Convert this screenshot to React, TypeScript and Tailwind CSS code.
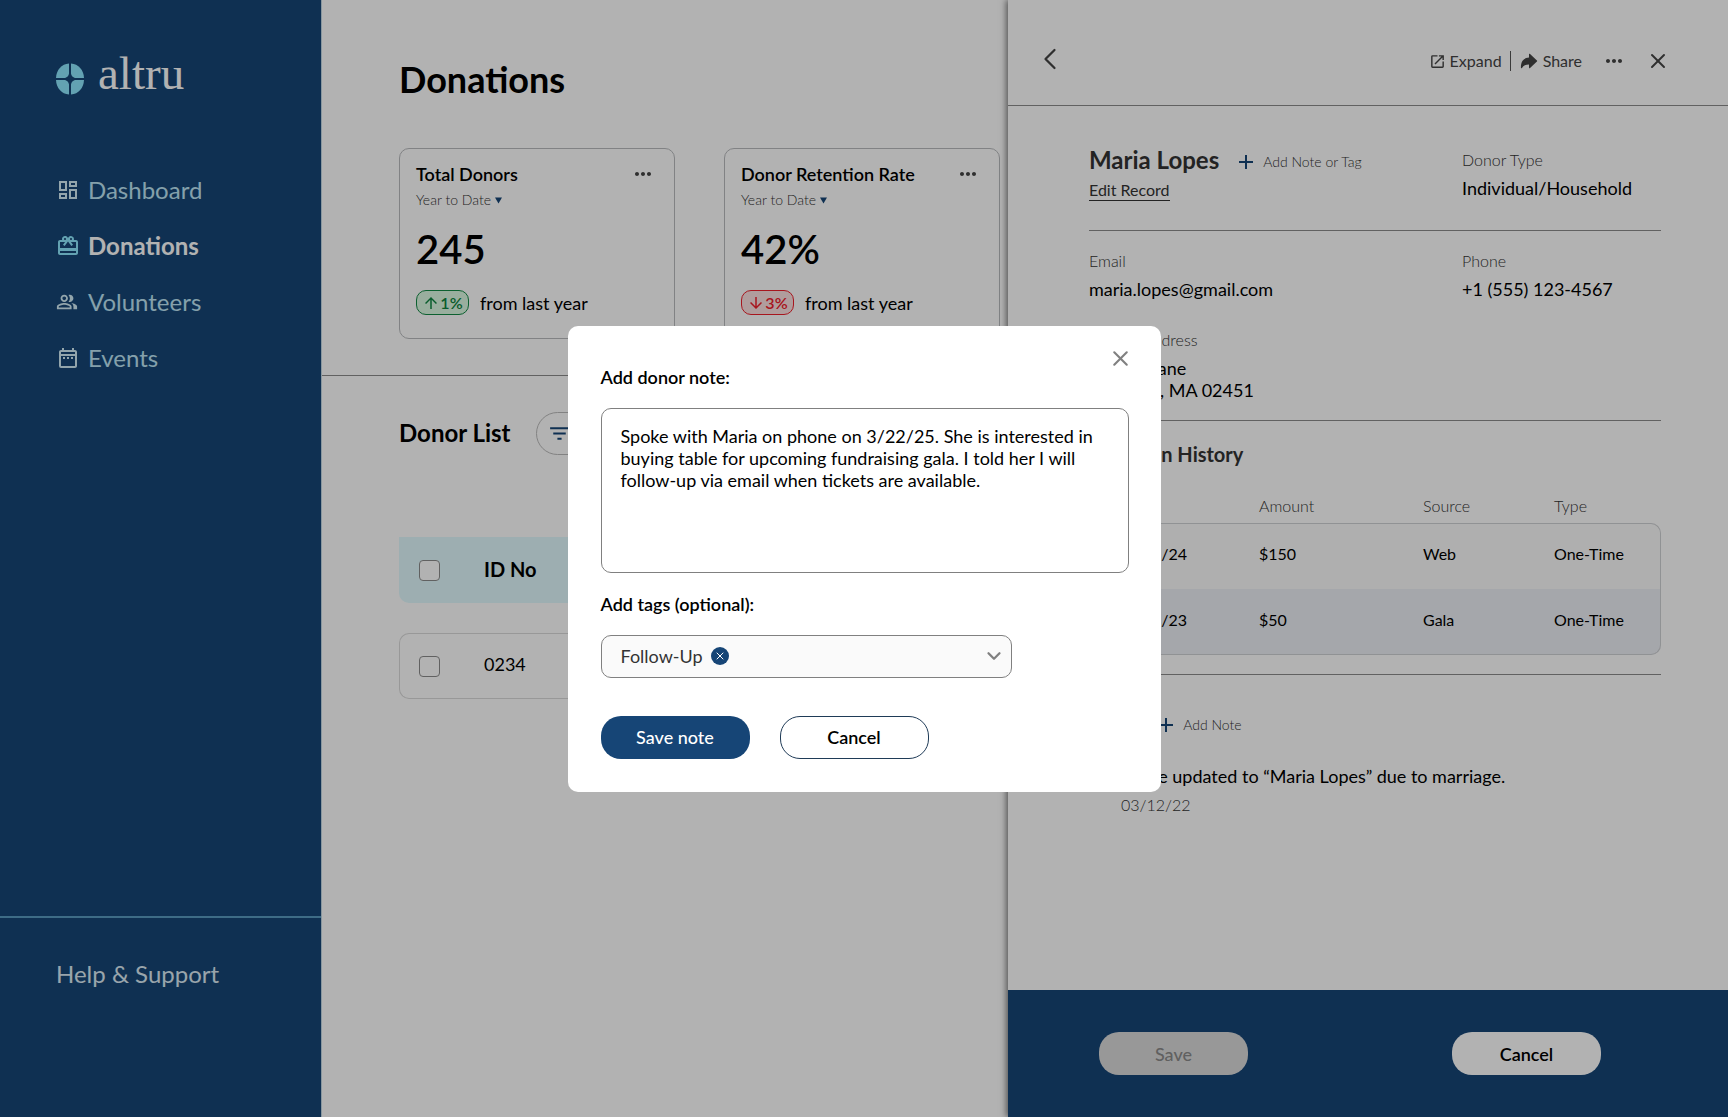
import React, { useState } from 'react';
import { ChevronDown, ChevronLeft, X } from 'lucide-react';
import { IoArrowRedo } from 'react-icons/io5';
import {
  MdArrowDownward,
  MdArrowUpward,
  MdFilterList,
  MdMoreHoriz,
  MdOpenInNew,
  MdOutlineCardGiftcard,
  MdOutlineDashboard,
  MdOutlineDateRange,
  MdOutlinePeopleAlt,
} from 'react-icons/md';

const navItems = [
  { label: 'Dashboard', Icon: MdOutlineDashboard, size: 24 },
  { label: 'Donations', Icon: MdOutlineCardGiftcard, size: 24, active: true },
  { label: 'Volunteers', Icon: MdOutlinePeopleAlt, size: 22 },
  { label: 'Events', Icon: MdOutlineDateRange, size: 24 },
];

const stats = [
  { title: 'Total Donors', value: '245', change: '1%', up: true },
  { title: 'Donor Retention Rate', value: '42%', change: '3%', up: false },
];

const donations = [
  { date: '12/03/24', amount: '$150', source: 'Web', type: 'One-Time' },
  { date: '11/18/23', amount: '$50', source: 'Gala', type: 'One-Time' },
];

function Logo() {
  return (
    <div className="flex items-center gap-3.5 pl-14">
      <svg width="28" height="32" viewBox="0 0 28 32" className="mt-3" fill="#8fe9ff">
        <path d="M13 0.500V10C13 12.500 11 15 8 15H0C0.300 7 5.500 1 13 0.500Z" />
        <path d="M15 0.500V10C15 12.500 17 15 20 15H28C27.700 7 22.500 1 15 0.500Z" />
        <path d="M13 31.500V22C13 19.500 11 17 8 17H0C0.300 25 5.500 31 13 31.500Z" />
        <path d="M15 31.500V22C15 19.500 17 17 20 17H28C27.700 25 22.500 31 15 31.500Z" />
      </svg>
      <span className="font-['Liberation_Serif',serif] text-[47px] leading-12 text-white">altru</span>
    </div>
  );
}

function Sidebar() {
  return (
    <aside className="flex w-[322px] shrink-0 flex-col border-r border-[#c3d9e4] bg-[#164576] pt-[49px]">
      <Logo />
      <nav className="mt-[77px] flex flex-col gap-6 pl-14">
        {navItems.map(({ label, Icon, size, active }) => (
          <a
            key={label}
            href="#"
            className={`flex items-center gap-2 text-2xl leading-8 ${active ? 'font-bold text-white' : 'text-[#bfe6f5]'}`}
          >
            <span className={`w-6 ${active ? 'text-[#8fe9ff]' : 'text-[#d3edf7]'}`}>
              <Icon size={size} />
            </span>
            {label}
          </a>
        ))}
      </nav>
      <div className="mt-auto h-[201px] border-t-2 border-[#5a9bc0] pt-10 pl-14">
        <a href="#" className="text-2xl leading-8 text-[#dcebf5]">Help &amp; Support</a>
      </div>
    </aside>
  );
}

function StatCard({ title, value, change, up }: { title: string; value: string; change: string; up: boolean }) {
  return (
    <section className="w-[276px] shrink-0 rounded-[10px] border border-[#b9bbbe] px-4 pt-[13px] pb-[23px]">
      <div className="flex items-center justify-between">
        <h2 className="text-lg leading-6 font-semibold">{title}</h2>
        <button aria-label={`${title} options`} className="mr-[3px] text-[#444]">
          <MdMoreHoriz size={24} />
        </button>
      </div>
      <button className="mt-1 flex items-center gap-1 text-sm leading-5 font-light text-[#333]">
        Year to Date
        <svg width="7" height="7" viewBox="0 0 7 7" fill="#164576"><path d="M0 0.500H7L3.500 6.500Z" /></svg>
      </button>
      <p className="mt-[15px] text-[40px] leading-12 font-semibold">{value}</p>
      <div className="mt-[17px] flex items-center gap-[11px]">
        <span
          className={`flex h-[25px] w-[53px] items-center justify-center rounded-[10px] border font-semibold ${
            up ? 'border-[#128a45] bg-[#dcf9e3] text-[#0d8540]' : 'border-[#f0202c] bg-[#fde1e1] text-[#f0202c]'
          }`}
        >
          {up ? <MdArrowUpward size={18} /> : <MdArrowDownward size={18} />}
          {change}
        </span>
        <span className="text-lg leading-6">from last year</span>
      </div>
    </section>
  );
}

function DonorList() {
  return (
    <section className="mt-9 border-t border-[#8c8c8c] pt-9 pr-2 pl-[77px]">
      <div className="flex items-center gap-[25px]">
        <h2 className="pb-0.5 text-2xl font-bold">Donor List</h2>
        <button className="flex h-[43px] items-center gap-2 rounded-full border border-[#bbb] px-2.5 text-lg text-[#164576]">
          <MdFilterList size={25} />
          Filter
        </button>
      </div>
      <table className="mt-[52px] w-full border-separate border-spacing-x-0 border-spacing-y-[30px] text-left">
        <thead>
          <tr className="h-[66px] bg-[#e1fafe] text-xl">
            <th className="w-[85px] rounded-bl-[10px] pl-5">
              <input
                type="checkbox"
                aria-label="Select all donors"
                className="block size-[21px] appearance-none rounded border border-[#8c8c8c] bg-white"
              />
            </th>
            <th className="pb-0.5 font-bold">ID No</th>
          </tr>
        </thead>
        <tbody>
          <tr className="h-[66px] text-lg">
            <td className="rounded-l-[10px] border-y border-l border-[#dadada] pl-[19px]">
              <input
                type="checkbox"
                aria-label="Select donor 0234"
                className="block size-[21px] appearance-none rounded border border-[#8c8c8c] bg-white"
              />
            </td>
            <td className="rounded-r-[10px] border-y border-r border-[#dadada] pb-1">0234</td>
          </tr>
        </tbody>
      </table>
    </section>
  );
}

function Field({ label, children }: { label: string; children: React.ReactNode }) {
  return (
    <div className="flex flex-col gap-[7px]">
      <span className="leading-5 font-light text-[#333]">{label}</span>
      <span className="text-lg leading-[22px]">{children}</span>
    </div>
  );
}

function AddButton({ children }: { children: React.ReactNode }) {
  return (
    <button className="flex items-center gap-2.5 pt-1 text-sm leading-5 font-light text-[#333]">
      <svg width="14" height="14" viewBox="0 0 14 14" stroke="#164576" strokeWidth="2"><path d="M7 0V14M0 7H14" /></svg>
      {children}
    </button>
  );
}

function DonationHistory() {
  return (
    <section className="border-b border-[#8c8c8c] pt-[21px] pb-[19px]">
      <h3 className="text-xl leading-6 font-bold text-[#333]">Donation History</h3>
      <table className="mt-[30px] w-full table-fixed border-separate border-spacing-0 text-left">
        <thead>
          <tr className="leading-5 text-[#333]">
            <th className="w-[170px] pb-[7px] pl-[27px] font-light">Date</th>
            <th className="w-[164px] pb-[7px] font-light">Amount</th>
            <th className="w-[131px] pb-[7px] font-light">Source</th>
            <th className="pb-[7px] font-light">Type</th>
          </tr>
        </thead>
        <tbody>
          <tr className="h-[66px] bg-[#fbfbfb]">
            <td className="rounded-tl-[10px] border-t border-l border-[#cfd1d4] pb-1.5 pl-[27px]">{donations[0].date}</td>
            <td className="border-t border-[#cfd1d4] pb-1.5">{donations[0].amount}</td>
            <td className="border-t border-[#cfd1d4] pb-1.5">{donations[0].source}</td>
            <td className="rounded-tr-[10px] border-t border-r border-[#cfd1d4] pb-1.5">{donations[0].type}</td>
          </tr>
          <tr className="h-[66px] bg-[#eceff5]">
            <td className="rounded-bl-[10px] border-b border-l border-[#cfd1d4] pb-1 pl-[27px]">{donations[1].date}</td>
            <td className="border-b border-[#cfd1d4] pb-1">{donations[1].amount}</td>
            <td className="border-b border-[#cfd1d4] pb-1">{donations[1].source}</td>
            <td className="rounded-br-[10px] border-r border-b border-[#cfd1d4] pb-1">{donations[1].type}</td>
          </tr>
        </tbody>
      </table>
    </section>
  );
}

function DonorPanel() {
  return (
    <aside className="flex w-5/12 shrink-0 flex-col bg-white shadow-[-2px_0_6px_rgba(0,0,0,0.5)]">
      <header className="flex h-[106px] items-center justify-between border-b border-[#8c8c8c] pt-[17px] pr-[58px] pl-6 text-[#444]">
        <button aria-label="Back" className="pb-1"><ChevronLeft size={36} strokeWidth={1.5} /></button>
        <div className="flex items-center">
          <button className="flex items-center gap-1"><MdOpenInNew size={17} />Expand</button>
          <span className="mx-2 h-5 border-l border-[#555]" />
          <button className="flex items-center gap-1"><IoArrowRedo size={20} />Share</button>
          <button aria-label="More options" className="ml-5"><MdMoreHoriz size={24} /></button>
          <button aria-label="Close panel" className="ml-5"><X size={24} strokeWidth={2} /></button>
        </div>
      </header>

      <div className="pr-[67px] pl-[81px]">
        <section className="grid grid-cols-[373px_1fr] border-b border-[#8c8c8c] pt-11 pb-[29px]">
          <div>
            <div className="flex h-5 items-center gap-5">
              <h2 className="text-2xl leading-5 font-bold text-[#333]">Maria Lopes</h2>
              <AddButton>Add Note or Tag</AddButton>
            </div>
            <a href="#" className="mt-2.5 block w-fit border-b border-[#333] leading-5 text-[#333]">Edit Record</a>
          </div>
          <Field label="Donor Type">Individual/Household</Field>
        </section>

        <section className="grid grid-cols-[373px_1fr] gap-y-[30px] border-b border-[#8c8c8c] pt-5 pb-[19px]">
          <Field label="Email">maria.lopes@gmail.com</Field>
          <Field label="Phone">+1 (555) 123-4567</Field>
          <Field label="Mailing Address">
            14 Mill Lane
            <br />
            Waltham, MA 02451
          </Field>
        </section>

        <DonationHistory />

        <section className="pt-9">
          <div className="flex h-6 items-center gap-[17px]">
            <h3 className="text-xl leading-6 font-bold text-[#333]">Notes</h3>
            <AddButton>Add Note</AddButton>
          </div>
          <div className="mt-[30px] pl-8">
            <p className="text-lg leading-[22px]">Name updated to “Maria Lopes” due to marriage.</p>
            <p className="mt-2 leading-5 font-light text-[#333]">03/12/22</p>
          </div>
        </section>
      </div>

      <footer className="mt-auto flex h-[127px] items-center justify-between bg-[#164576] pr-[127px] pl-[91px]">
        <button disabled className="h-[43px] w-[149px] rounded-[20px] bg-[#dadada] text-lg font-medium text-[#8a8a8a]">Save</button>
        <button className="h-[43px] w-[149px] rounded-[20px] bg-white text-lg font-semibold">Cancel</button>
      </footer>
    </aside>
  );
}

function NoteDialog() {
  const [note, setNote] = useState(
    'Spoke with Maria on phone on 3/22/25. She is interested in buying table for upcoming fundraising gala. I told her I will follow-up via email when tickets are available.'
  );

  return (
    <div className="fixed inset-0 flex items-center justify-center bg-black/30">
      <div role="dialog" aria-label="Add donor note" className="relative flex w-[593px] flex-col rounded-[10px] bg-white pt-10 pr-8 pb-[33px] pl-[33px]">
        <button aria-label="Close" className="absolute top-5 right-7 text-[#808080]">
          <X size={25} strokeWidth={2} />
        </button>
        <label htmlFor="note" className="text-lg leading-[22px] font-semibold">Add donor note:</label>
        <textarea
          id="note"
          value={note}
          onChange={e => setNote(e.target.value)}
          className="mt-5 h-[165px] resize-none rounded-[10px] border border-[#808080] px-[19px] py-4 text-lg leading-[22px]"
        />
        <label htmlFor="tags" className="mt-5 text-lg leading-[22px] font-semibold">Add tags (optional):</label>
        <div className="mt-5 flex h-[43px] w-[411px] items-center rounded-[10px] border border-[#808080] bg-[#fafafa] pr-2.5 pl-[19px]">
          <span className="text-lg text-[#333]">Follow-Up</span>
          <button aria-label="Remove Follow-Up" className="ml-2 flex size-[18px] items-center justify-center rounded-full bg-[#164576] text-white">
            <X size={12} />
          </button>
          <select id="tags" className="h-full flex-1 appearance-none bg-transparent">
            <option value=""></option>
            <option>Follow-Up</option>
          </select>
          <ChevronDown size={22} strokeWidth={2.5} className="pointer-events-none -mr-1 -ml-6 text-[#808080]" />
        </div>
        <div className="mt-[38px] flex gap-[30px]">
          <button className="h-[43px] w-[149px] rounded-[20px] bg-[#164576] text-lg font-medium text-white">Save note</button>
          <button className="h-[43px] w-[149px] rounded-[20px] border border-[#1f3b57] text-lg font-semibold">Cancel</button>
        </div>
      </div>
    </div>
  );
}

export default function App() {
  return (
    <div className="flex min-h-screen bg-white font-['Lato',sans-serif] text-base text-black">
      <Sidebar />
      <main className="min-w-0 flex-1 overflow-hidden pt-[59px]">
        <h1 className="pl-[77px] text-4xl leading-10 font-bold">Donations</h1>
        <div className="mt-[49px] flex gap-[49px] pl-[77px]">
          {stats.map(stat => (
            <StatCard key={stat.title} {...stat} />
          ))}
        </div>
        <DonorList />
      </main>
      <DonorPanel />
      <NoteDialog />
    </div>
  );
}
